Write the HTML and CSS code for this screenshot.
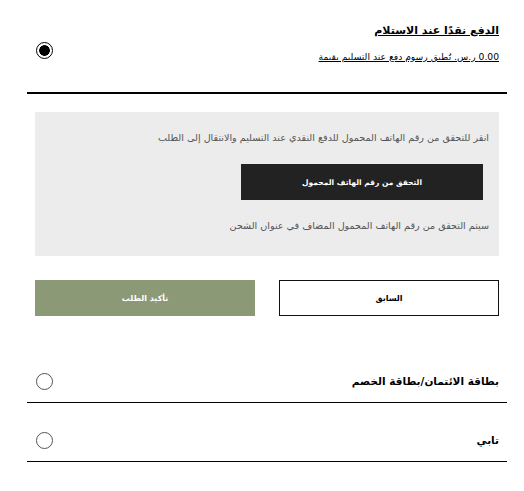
FILE: index.html
```html
<!DOCTYPE html>
<html lang="ar" dir="rtl">
<head>
<meta charset="utf-8">
<title>الدفع</title>
<link rel="stylesheet" href="styles.css">
</head>
<body>
<div class="payment">
  <div class="option option-selected">
    <div class="option-head">
      <div class="option-text">
        <div class="option-title underline">الدفع نقدًا عند الاستلام</div>
        <div class="option-sub underline">0.00 ر.س. تُطبق رسوم دفع عند التسليم بقيمة</div>
      </div>
      <span class="radio radio-on"></span>
    </div>
  </div>

  <div class="verify-panel">
    <p class="verify-note">انقر للتحقق من رقم الهاتف المحمول للدفع النقدي عند التسليم والانتقال إلى الطلب</p>
    <button class="btn-verify" type="button">التحقق من رقم الهاتف المحمول</button>
    <p class="verify-note verify-note-2">سيتم التحقق من رقم الهاتف المحمول المضاف في عنوان الشحن</p>
  </div>

  <div class="actions">
    <button class="btn btn-back" type="button">السابق</button>
    <button class="btn btn-confirm" type="button">تأكيد الطلب</button>
  </div>

  <div class="option option-row">
    <div class="option-head">
      <div class="option-label">بطاقة الائتمان/بطاقة الخصم</div>
      <span class="radio"></span>
    </div>
  </div>
  <div class="option option-row">
    <div class="option-head">
      <div class="option-label">تابي</div>
      <span class="radio"></span>
    </div>
  </div>
</div>
</body>
</html>
```

FILE: styles.css
```css
* { box-sizing: border-box; }

body {
  margin: 0;
  background: #fff;
  font-family: "DejaVu Sans", "Liberation Sans", sans-serif;
  color: #000;
}

.payment {
  width: 480px;
  margin: 0 17px 0 27px;
  direction: rtl;
}

.option-head {
  display: flex;
  justify-content: space-between;
  align-items: center;
  padding: 0 8px 0 9px;
}

.option-selected {
  padding-top: 20px;
  padding-bottom: 28px;
  border-bottom: 2px solid #000;
}

.option-selected .option-head { align-items: flex-start; }

.option-title {
  font-size: 11px;
  font-weight: bold;
  line-height: 22px;
}

.option-sub {
  margin-top: 8px;
  font-size: 9.2px;
  line-height: 14px;
}

.underline { text-decoration: underline; }

.radio {
  display: block;
  width: 17px;
  height: 17px;
  border-radius: 50%;
  border: 1px solid #555;
  background: #fff;
  flex: none;
}

.radio-on {
  margin-top: 22px;
  border: 1.5px solid #000;
  background: radial-gradient(circle, #000 0 5px, #fff 5.6px);
}

.verify-panel {
  margin: 18px 8px 0;
  background: #ececec;
  padding: 18px 10px 22px;
}

.verify-note {
  margin: 0;
  font-size: 9.6px;
  line-height: 16px;
  color: #555;
}

.btn-verify {
  display: block;
  margin: 18px 6px 18px 0;
  width: 242px;
  height: 36px;
  padding: 0;
  border: 0;
  background: #222;
  color: #fff;
  font-family: inherit;
  font-size: 7.5px;
  font-weight: bold;
}

.actions {
  display: grid;
  grid-template-columns: 1fr 1fr;
  gap: 24px;
  margin: 24px 8px 0;
}

.btn {
  height: 36px;
  padding: 0;
  font-family: inherit;
  font-size: 8px;
  font-weight: bold;
}

.btn-back {
  background: #fff;
  border: 1px solid #111;
  color: #000;
}

.btn-confirm {
  background: #8b9977;
  border: 0;
  color: #fff;
}

.actions + .option-row { margin-top: 28px; }

.option-row {
  padding-top: 26px;
  padding-bottom: 10px;
  border-bottom: 1px solid #000;
}

.option-label {
  font-size: 10.5px;
  font-weight: bold;
  line-height: 22px;
}
```
